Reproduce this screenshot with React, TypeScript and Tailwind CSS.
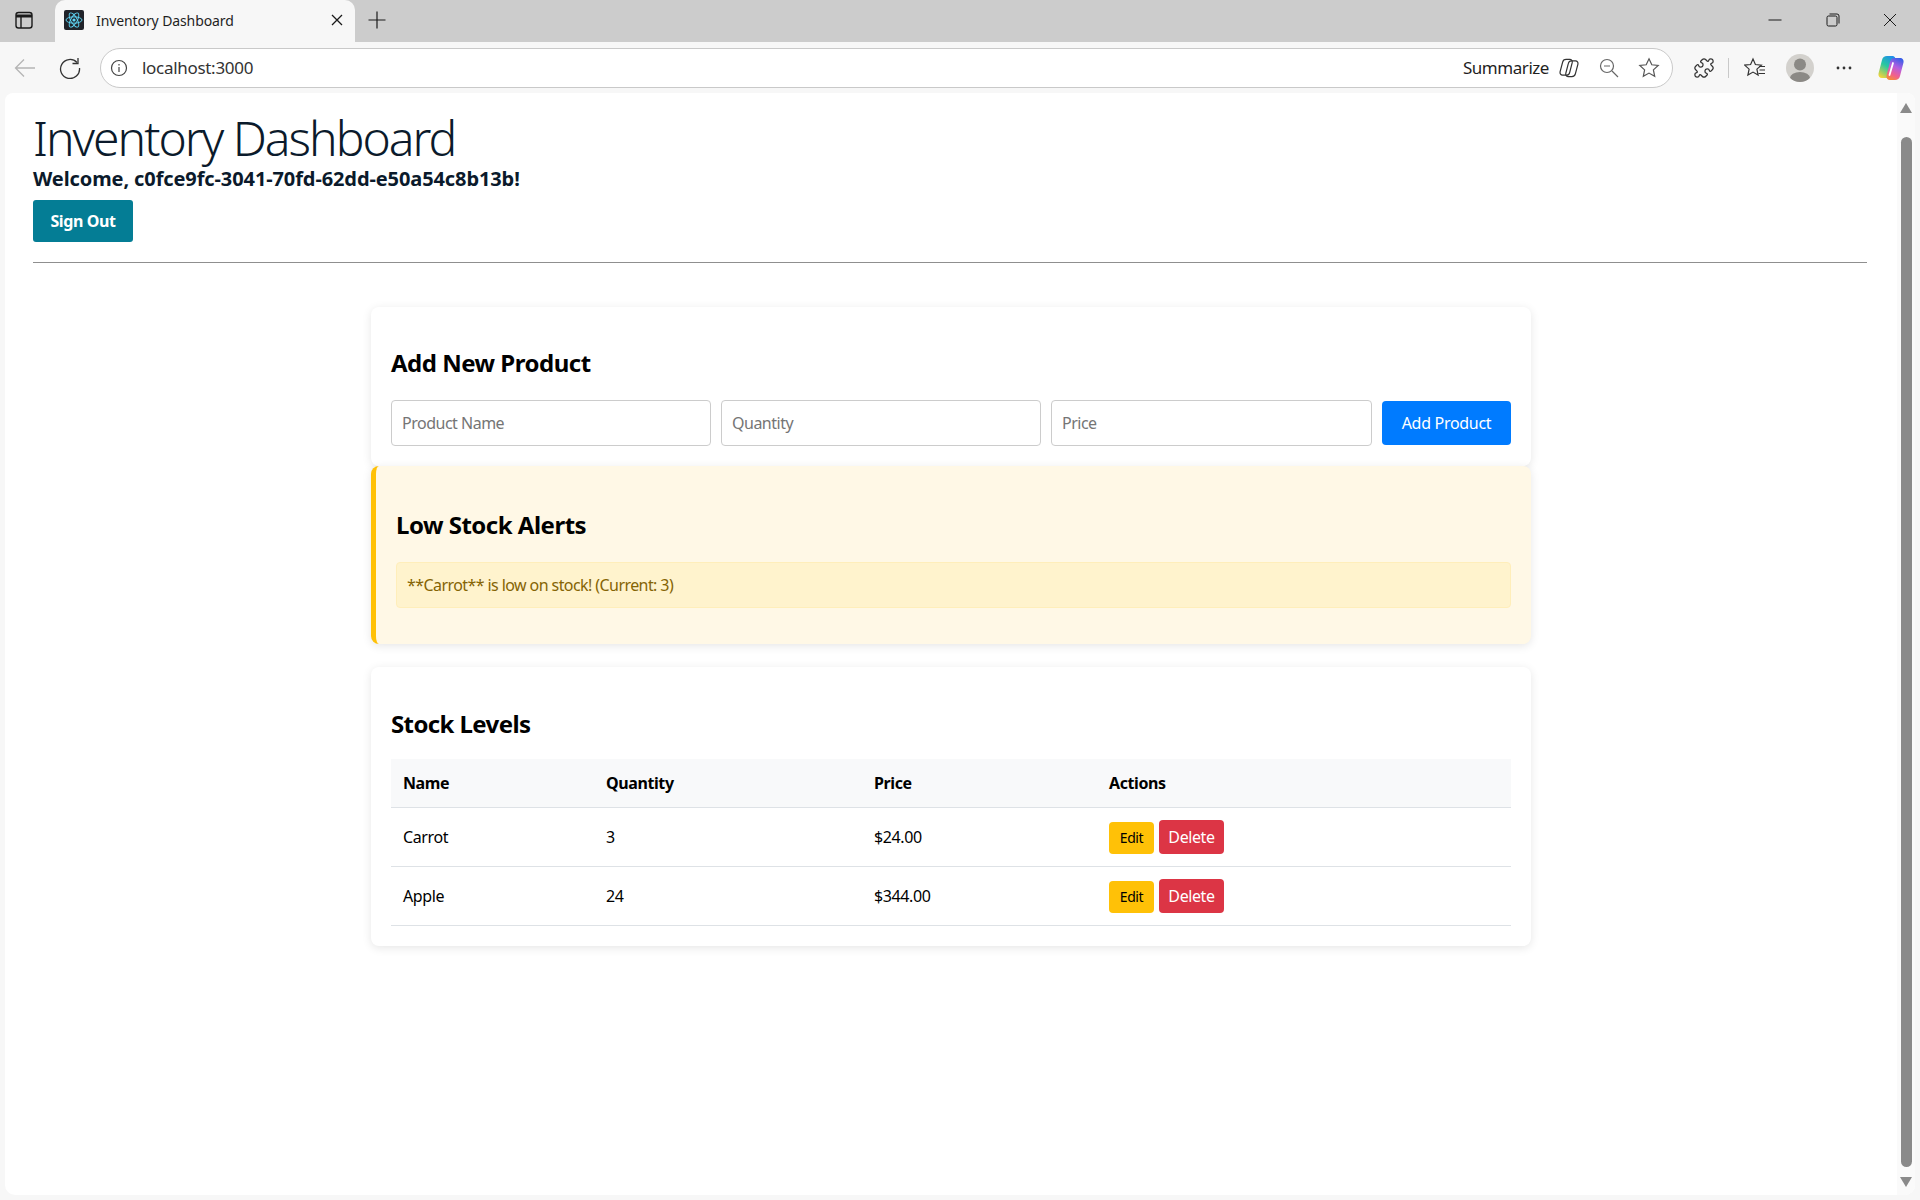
import { Puzzle } from "lucide-react";

const font = "font-['Noto_Sans','Open_Sans',sans-serif]";

const products = [
  { name: "Carrot", quantity: 3, price: "$24.00" },
  { name: "Apple", quantity: 24, price: "$344.00" },
];

// Samma två former används för Summarize-ikonen och Copilot-loggan
const leftBlob = "M10 2H15C17.500 2 19 4 18.500 6.500L15 20C14.500 22.500 13 24 10.500 24H5C2.500 24 1 22 1.500 19.500L5 6C5.500 3.500 7.500 2 10 2Z";
const rightBlob = "M17.500 4H23C25.500 4 27 6 26.500 8.500L23 22C22.500 24.500 20.500 26 18 26H13C10.500 26 9 24 9.500 21.500L13 8C13.500 5.500 15 4 17.500 4Z";

// Browser tab strip
const TabStrip = () => (
  <div className="flex h-[42px] shrink-0 items-start bg-[#cccccc]">
    <div className="flex h-[40px] w-[55px] items-center justify-center pr-[7px]">
      <svg width="20" height="20" viewBox="0 0 20 20" fill="none" stroke="#1a1a1a" strokeWidth="1.4">
        <rect x="2" y="2.5" width="16" height="15.5" rx="2.5" />
        <path d="M2 6h16" strokeWidth="3" />
        <path d="M7 6v12" />
      </svg>
    </div>
    <div className="flex h-[42px] w-[300px] items-center rounded-t-[10px] bg-[#f7f7f7] pb-[2px] pl-[9px] pr-[12px]">
      <svg width="20" height="20" viewBox="0 0 20 20" className="shrink-0">
        <rect width="20" height="20" rx="2" fill="#20232a" />
        <g fill="none" stroke="#61dafb" strokeWidth="0.9">
          <ellipse cx="10" cy="10" rx="8" ry="3.2" />
          <ellipse cx="10" cy="10" rx="8" ry="3.2" transform="rotate(60 10 10)" />
          <ellipse cx="10" cy="10" rx="8" ry="3.2" transform="rotate(120 10 10)" />
        </g>
        <circle cx="10" cy="10" r="1.6" fill="#61dafb" />
      </svg>
      <span className="ml-[12px] flex-1 text-[14px] tracking-[-0.1px] text-[#1f1f1f]">Inventory Dashboard</span>
      <svg width="12" height="12" viewBox="0 0 12 12" stroke="#1a1a1a" strokeWidth="1.3">
        <path d="M1 1l10 10M11 1L1 11" />
      </svg>
    </div>
    <div className="flex h-[40px] w-[44px] items-center justify-center">
      <svg width="18" height="18" viewBox="0 0 18 18" stroke="#1a1a1a" strokeWidth="1.2">
        <path d="M9 0.5v17M0.5 9h17" />
      </svg>
    </div>
    <div className="flex-1" />
    <div className="flex h-[40px] items-center">
      <div className="flex w-[58px] justify-center">
        <svg width="14" height="14" viewBox="0 0 14 14" stroke="#1a1a1a" strokeWidth="1">
          <path d="M0.5 7h13" />
        </svg>
      </div>
      <div className="flex w-[58px] justify-center">
        <svg width="14" height="14" viewBox="0 0 14 14" fill="none" stroke="#1a1a1a" strokeWidth="1">
          <rect x="1" y="3" width="10" height="10" rx="1.5" />
          <path d="M3.5 1h7.5a2 2 0 0 1 2 2v7.5" />
        </svg>
      </div>
      <div className="flex w-[58px] justify-center pr-[2px]">
        <svg width="14" height="14" viewBox="0 0 14 14" stroke="#1a1a1a" strokeWidth="1">
          <path d="M1 1l12 12M13 1L1 13" />
        </svg>
      </div>
    </div>
  </div>
);

// Address bar and toolbar icons
const Toolbar = () => (
  <div className="flex h-[51px] shrink-0 items-center bg-[#f7f7f7]">
    <div className="flex w-[47px] justify-center pl-[3px]">
      <svg width="22" height="22" viewBox="0 0 22 22" fill="none" stroke="#b5b5b5" strokeWidth="1.3">
        <path d="M21 11H1.5M10 2.5L1.5 11l8.5 8.5" />
      </svg>
    </div>
    <div className="flex w-[53px] justify-center pr-[7px]">
      <svg width="22" height="22" viewBox="0 0 22 22" fill="none" stroke="#333333" strokeWidth="1.3">
        <path d="M18 5.5A9.5 9.5 0 1 0 20.5 11" />
        <path d="M19 1v5.5h-5.5" />
      </svg>
    </div>
    <div className="flex h-[40px] w-[1573px] items-center rounded-full border border-[#c9c9c9] bg-white pl-[9px] pr-[12px]">
      <svg width="18" height="18" viewBox="0 0 18 18" fill="none" stroke="#444444" strokeWidth="1.2">
        <circle cx="9" cy="9" r="7.5" />
        <path d="M9 8v5M9 5v1.4" />
      </svg>
      <span className="ml-[14px] flex-1 text-[17px] tracking-[-0.3px] text-[#333333]">localhost:3000</span>
      <span className="text-[17px] tracking-[-0.45px] text-[#1f1f1f]">Summarize</span>
      <svg width="20" height="20" viewBox="0 0 28 28" fill="none" stroke="#333333" strokeWidth="1.7" className="ml-[10px]">
        <path d={leftBlob} />
        <path d={rightBlob} />
      </svg>
      <svg width="20" height="20" viewBox="0 0 20 20" fill="none" stroke="#666666" strokeWidth="1.2" className="ml-[20px]">
        <circle cx="8" cy="8" r="6.5" />
        <path d="M5 8h6M13 13l6 6" />
      </svg>
      <svg width="22" height="22" viewBox="0 0 22 22" fill="none" stroke="#555555" strokeWidth="1.2" className="ml-[19px]">
        <path d="M11 1.8l2.8 6 6.4.7-4.8 4.4 1.3 6.4-5.7-3.2-5.7 3.2 1.3-6.4-4.8-4.4 6.4-.7z" />
      </svg>
    </div>
    <div className="flex flex-1 items-center">
      <Puzzle size={22} strokeWidth={1.4} color="#333333" className="ml-[20px]" />
      <div className="ml-[13px] h-[20px] w-px bg-[#c9c9c9]" />
      <svg width="22" height="22" viewBox="0 0 22 22" fill="none" stroke="#333333" strokeWidth="1.2" className="ml-[15px]">
        <path d="M9 2l2.4 5.500 6 .6-4.500 4 1.200 6-5.100-3-5.100 3 1.200-6-4.500-4 6-.6z" />
        <path d="M15 9.500h6M15.500 13h5.500M14.500 16.500h6.500" />
      </svg>
      <div className="ml-[20px] flex h-[28px] w-[28px] items-center justify-center overflow-hidden rounded-full bg-[#d3d1cd]">
        <svg width="28" height="28" viewBox="0 0 28 28" fill="#8b8985">
          <circle cx="14" cy="10.500" r="6" />
          <ellipse cx="14" cy="24" rx="10" ry="6" />
        </svg>
      </div>
      <svg width="16" height="4" viewBox="0 0 16 4" fill="#333333" className="ml-[22px]">
        <circle cx="2" cy="2" r="1.400" />
        <circle cx="8" cy="2" r="1.400" />
        <circle cx="14" cy="2" r="1.400" />
      </svg>
      <svg width="28" height="28" viewBox="0 0 28 28" className="ml-[25px]">
        <defs>
          <linearGradient id="copLeft" x1="0.7" y1="0" x2="0.2" y2="1">
            <stop offset="0" stopColor="#1f8fe8" />
            <stop offset="0.45" stopColor="#27c8a0" />
            <stop offset="1" stopColor="#f2d43a" />
          </linearGradient>
          <linearGradient id="copRight" x1="0.7" y1="0" x2="0.3" y2="1">
            <stop offset="0" stopColor="#3a5fe8" />
            <stop offset="0.4" stopColor="#b45ee0" />
            <stop offset="0.75" stopColor="#f0608f" />
            <stop offset="1" stopColor="#f58a3c" />
          </linearGradient>
        </defs>
        <path d={leftBlob} fill="url(#copLeft)" />
        <path d={rightBlob} fill="url(#copRight)" />
        <path d="M16 9L12.500 21" stroke="#ffffff" strokeWidth="1.800" strokeLinecap="round" />
      </svg>
    </div>
  </div>
);

const Scrollbar = () => (
  <div className="flex w-[18px] shrink-0 flex-col items-center bg-[#fafafa] pt-[10px] pb-[8px]">
    <div className="h-0 w-0 border-x-[6px] border-b-[10px] border-x-transparent border-b-[#8a8a8a]" />
    <div className="mt-[24px] w-[11px] flex-1 rounded-full bg-[#8a8a8a]" />
    <div className="mt-[10px] h-0 w-0 border-x-[6px] border-t-[10px] border-x-transparent border-t-[#8a8a8a]" />
  </div>
);

const App = () => {
  return (
    <div className={`flex h-screen flex-col overflow-hidden bg-[#f7f7f7] ${font}`}>
      <TabStrip />
      <Toolbar />
      <div className="mx-[5px] mb-[5px] flex min-h-0 flex-1 overflow-hidden rounded-t-[8px] rounded-b-[10px] bg-white">
        <main className="min-w-0 flex-1 pl-[28px] pr-[30px]">
          <h1 className="pt-[17px] text-[48px] leading-[55px] font-light tracking-[-2px] text-[#0b1a2b]">Inventory Dashboard</h1>
          <h3 className="text-[20px] leading-[28px] font-bold tracking-[-0.1px] text-[#0b1a2b]">
            Welcome, c0fce9fc-3041-70fd-62dd-e50a54c8b13b!
          </h3>
          <button type="button" className="mt-[7px] h-[42px] w-[100px] rounded-[3px] bg-[#047d95] text-[16px] font-bold tracking-[-0.4px] text-white">
            Sign Out
          </button>
          <hr className="mt-[20px] border-t border-[#8f8f8f]" />

          <div className="mt-[44px] ml-[338px] w-[1160px]">
            {/* Formulär */}
            <section className="rounded-[8px] bg-white p-[20px] shadow-[0_2px_10px_rgba(0,0,0,0.1)]">
              <h2 className="mt-[18px] text-[24px] leading-[36px] font-bold tracking-[-0.5px] text-black">Add New Product</h2>
              <div className="mt-[19px] flex items-center gap-[10px]">
                <input
                  placeholder="Product Name"
                  className="h-[46px] w-[320px] rounded-[4px] border border-[#cccccc] px-[10px] text-[16px] tracking-[-0.5px] placeholder:text-[#757575]"
                />
                <input
                  placeholder="Quantity"
                  className="h-[46px] w-[320px] rounded-[4px] border border-[#cccccc] px-[10px] text-[16px] tracking-[-0.5px] placeholder:text-[#757575]"
                />
                <input
                  placeholder="Price"
                  className="h-[46px] w-[321px] rounded-[4px] border border-[#cccccc] px-[10px] text-[16px] tracking-[-0.5px] placeholder:text-[#757575]"
                />
                <button type="button" className="h-[44px] flex-1 rounded-[4px] bg-[#007bff] text-[16px] tracking-[-0.3px] text-white">
                  Add Product
                </button>
              </div>
            </section>

            {/* Varningar */}
            <section className="rounded-[8px] border-l-[5px] border-[#ffc107] bg-[#fff8e6] pt-[39px] pr-[20px] pb-[36px] pl-[20px] shadow-[0_2px_10px_rgba(0,0,0,0.1)]">
              <h2 className="text-[24px] leading-[40px] font-bold tracking-[-0.5px] text-black">Low Stock Alerts</h2>
              <div className="mt-[17px] flex h-[46px] items-center rounded-[4px] border border-[#ffeeba] bg-[#fff3cd] px-[10px] text-[16px] tracking-[-0.58px] text-[#856404]">
                **Carrot** is low on stock! (Current: 3)
              </div>
            </section>

            {/* Lagersaldo */}
            <section className="mt-[23px] rounded-[8px] bg-white p-[20px] shadow-[0_2px_10px_rgba(0,0,0,0.1)]">
              <h2 className="mt-[19px] text-[24px] leading-[36px] font-bold tracking-[-0.6px] text-black">Stock Levels</h2>
              <table className="mt-[17px] w-full table-fixed border-collapse text-[16px] tracking-[-0.4px] text-black">
                <thead>
                  <tr className="h-[48px] border-b border-[#dee2e6] bg-[#f8f9fa] text-left font-bold">
                    <th className="w-[203px] px-[12px]">Name</th>
                    <th className="w-[268px] px-[12px]">Quantity</th>
                    <th className="w-[235px] px-[12px]">Price</th>
                    <th className="px-[12px]">Actions</th>
                  </tr>
                </thead>
                <tbody>
                  {products.map((product) => (
                    <tr key={product.name} className="h-[59px] border-b border-[#dee2e6]">
                      <td className="px-[12px]">{product.name}</td>
                      <td className="px-[12px]">{product.quantity}</td>
                      <td className="px-[12px]">{product.price}</td>
                      <td className="px-[12px]">
                        <div className="flex items-end gap-[5px]">
                          <button type="button" className="h-[32px] w-[45px] rounded-[4px] bg-[#ffc107] text-[14px] text-black">
                            Edit
                          </button>
                          <button type="button" className="h-[34px] w-[65px] rounded-[4px] bg-[#dc3545] text-[16px] text-white">
                            Delete
                          </button>
                        </div>
                      </td>
                    </tr>
                  ))}
                </tbody>
              </table>
            </section>
          </div>
        </main>
        <Scrollbar />
      </div>
    </div>
  );
};

export default App;
